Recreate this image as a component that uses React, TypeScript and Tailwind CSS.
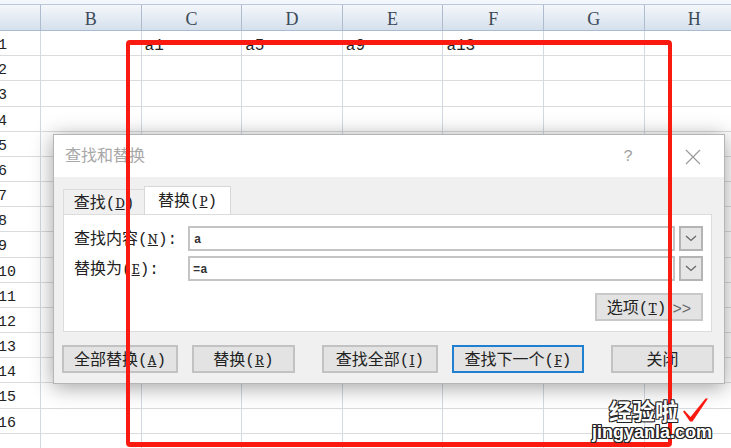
import React from "react";

const cols = ["", "B", "C", "D", "E", "F", "G", "H"];
const cellFont = "[font-family:'Liberation_Mono','Noto_Sans_CJK_SC',monospace]";
const outline = "[text-shadow:-1px_-1px_0_#222,1px_-1px_0_#222,-1px_1px_0_#222,1px_1px_0_#222,0_-1px_0_#222,0_1px_0_#222,-1px_0_0_#222,1px_0_0_#222]";

function Btn({ children, className = "border-[#c2c2c2]" }: { children: React.ReactNode; className?: string }) {
  return (
    <div className={"flex items-center justify-center h-[28px] border-2 bg-[#e3e3e3] text-[16px] text-[#222] whitespace-nowrap pt-[3px] " + className}>
      {children}
    </div>
  );
}

function U({ c }: { c: string }) {
  return <span className="underline underline-offset-1 text-[15px] font-serif [font-family:'Liberation_Mono',monospace]">{c}</span>;
}

function Chevron() {
  return (
    <div className="w-[24px] h-full border-2 border-[#b4b4b4] bg-[#e6e6e6] flex items-center justify-center shrink-0">
      <svg width="12" height="7" viewBox="0 0 12 7" fill="none" stroke="#666" strokeWidth="1.3">
        <path d="M1 1l5 4.5L11 1" />
      </svg>
    </div>
  );
}

export default function App() {
  const rows = Array.from({ length: 17 }, (_, i) => i + 1);
  const data: Record<string, string> = { C: "a1", D: "a5", E: "a9", F: "a13" };
  return (
    <div className={"relative w-[731px] h-[448px] overflow-hidden bg-white " + cellFont}>
      <div className="h-[5px] bg-[#f3f6fa] border-b border-[#b9cade]" />
      <div className="grid grid-cols-[40px_repeat(7,100.6px)] h-[26px] bg-gradient-to-b from-[#f4f7fb] to-[#d5e0ec] border-b border-[#a9bbd0]">
        {cols.map((c, i) => (
          <div key={i} className={"flex items-center justify-center pt-[3px] text-[18px] leading-none text-[#3c4a58] [font-family:'Liberation_Serif',serif] " + (i > 0 ? "border-l border-[#aebccd]" : "")}>
            {c}
          </div>
        ))}
      </div>
      <div className="flex flex-col">
        {rows.map((r) => (
          <div key={r} className="grid grid-cols-[40px_repeat(7,100.6px)] h-[25.18px] border-b border-[#d9dcdf]">
            <div className="flex items-center -ml-[2px] text-[15px] text-[#222] pt-[4px]">{r <= 16 ? r : ""}</div>
            {cols.slice(1).map((c) => (
              <div key={c} className="border-l border-[#d3d9e2] pl-[3px] pt-[6px] text-[16px] leading-[18px] text-[#222]">
                {r === 1 ? data[c] : ""}
              </div>
            ))}
          </div>
        ))}
      </div>

      <div className="absolute left-[53px] top-[134px] w-[672px] h-[250px] flex flex-col bg-[#f0f0f0] border border-[#b5b5b5] shadow-[0_3px_20px_rgba(0,0,0,0.38)]">
        <div className="h-[42px] bg-white flex items-center justify-between pl-[11px] pr-[23px] pt-[2px] shrink-0">
          <span className="text-[16px] text-[#a8a8a8]">查找和替换</span>
          <div className="flex items-center gap-[52px]">
            <span className="text-[16px] text-[#a0a0a0]">?</span>
            <svg width="16" height="16" viewBox="0 0 16 16" fill="none" stroke="#9a9a9a" strokeWidth="1.2">
              <path d="M1 1l14 14M15 1L1 15" />
            </svg>
          </div>
        </div>
        <div className="flex items-end h-[37px] pl-[9px] shrink-0">
          <div className="w-[81px] h-[25px] flex items-center justify-center pt-[3px] text-[16px] text-[#222] border-t border-l border-[#dcdcdc] whitespace-nowrap">
            查找(<U c="D" />)
          </div>
          <div className="w-[87px] h-[28px] bg-white flex items-center justify-center pt-[2px] text-[16px] text-[#222] border border-b-0 border-[#d8d8d8] whitespace-nowrap">
            替换(<U c="P" />)
          </div>
        </div>
        <div className="ml-[9px] mr-[12px] h-[118px] bg-white border border-[#dcdcdc] flex flex-col pl-[10px] pr-[8px] pt-[11px] shrink-0">
          <div className="flex items-center h-[25px] mb-[5px]">
            <span className="w-[114px] pt-[3px] text-[16px] text-[#222] whitespace-nowrap shrink-0">查找内容(<U c="N" />):</span>
            <div className="flex-1 h-full border-2 border-[#c4c4c4] mr-[4px] flex items-center pl-[4px] pt-[2px] text-[12px] font-bold text-[#333]">a</div>
            <Chevron />
          </div>
          <div className="flex items-center h-[25px]">
            <span className="w-[114px] pt-[2px] text-[16px] text-[#222] whitespace-nowrap shrink-0">替换为(<U c="E" />):</span>
            <div className="flex-1 h-full border-2 border-[#c4c4c4] mr-[4px] flex items-center pl-[3px] pt-[2px] text-[12px] font-bold text-[#333]">=a</div>
            <Chevron />
          </div>
          <div className="flex justify-end mt-[12px]">
            <Btn className="w-[108px] border-[#c8c8c8]">
              选项(<U c="T" />)<span className="ml-[6px] text-[#666] [font-family:'Liberation_Sans',sans-serif] font-light">&gt;&gt;</span>
            </Btn>
          </div>
        </div>
        <div className="flex items-center pl-[8px] mt-[13px]">
          <Btn className="w-[116px] border-[#c2c2c2]">全部替换(<U c="A" />)</Btn>
          <Btn className="w-[103px] ml-[14px] border-[#c2c2c2]">替换(<U c="R" />)</Btn>
          <Btn className="w-[116px] ml-[27px] border-[#c2c2c2]">查找全部(<U c="I" />)</Btn>
          <Btn className="w-[132px] ml-[14px] border-[#1f7fd0]">查找下一个(<U c="F" />)</Btn>
          <Btn className="w-[103px] ml-[27px] border-[#c2c2c2]">关闭</Btn>
        </div>
      </div>

      <div className="absolute left-[126px] top-[40px] w-[546px] h-[407px] border-x-[4px] border-y-[5px] border-[#fb1a10] rounded-[4px] pointer-events-none" />

      <div className="absolute left-[592px] top-[397px] w-[126px] flex flex-col leading-none">
        <div className="flex items-center h-[26px] pl-[17px]">
          <span className="text-[23px] leading-[26px] font-bold text-white [font-family:'Noto_Sans_CJK_SC',sans-serif] [text-shadow:-1px_-1px_0_#222,1px_-1px_0_#222,-1px_1px_0_#222,1px_1px_0_#222]">经验啦</span>
          <svg className="ml-[5px] shrink-0" width="25" height="24" viewBox="0 0 25 24" fill="#fb1a10">
            <path d="M0 13.5l1.5-1 6 6.5L22.5 0.5h2.5L9.5 23.5h-2.5L0 13.5z" />
          </svg>
        </div>
        <span className={"text-[18px] leading-[18px] font-bold text-white whitespace-nowrap [font-family:'Liberation_Sans',sans-serif] " + outline}>jingyanla.com</span>
      </div>
    </div>
  );
}
